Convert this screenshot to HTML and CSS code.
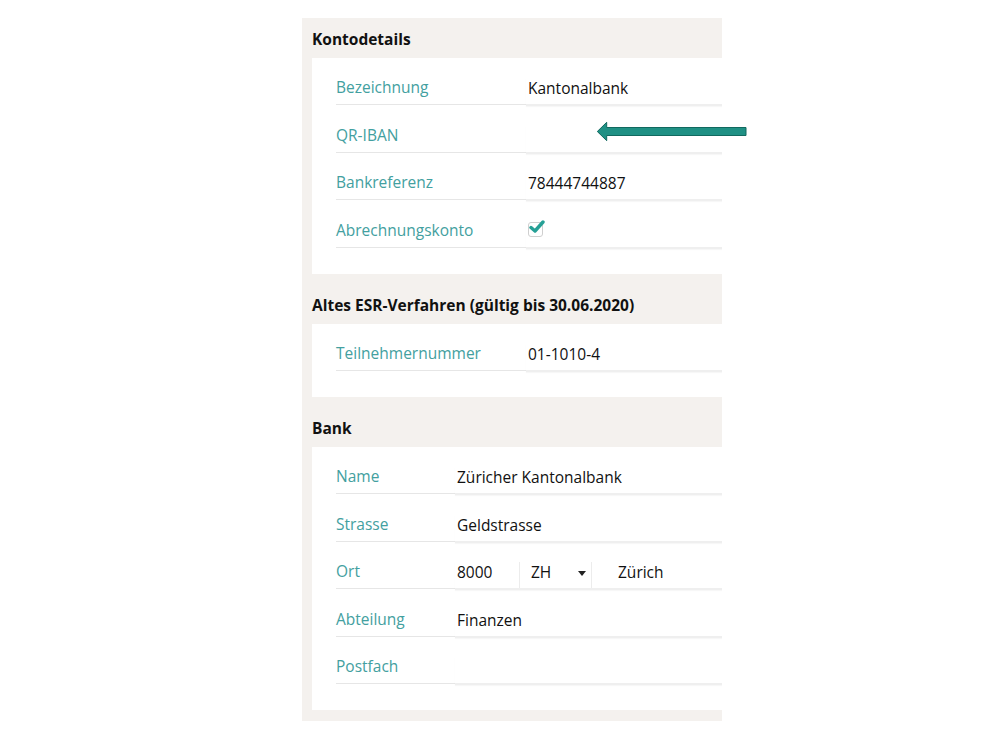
FILE: index.html
```html
<!DOCTYPE html>
<html lang="de">
<head>
<meta charset="utf-8">
<title>Kontodetails</title>
<link rel="stylesheet" href="styles.css">
</head>
<body>
<div class="panel">
  <div class="section-title">Kontodetails</div>
  <div class="card">
    <div class="row"><div class="label wide">Bezeichnung</div><div class="value">Kantonalbank</div></div>
    <div class="row"><div class="label wide">QR-IBAN</div><div class="value"></div></div>
    <div class="row"><div class="label wide">Bankreferenz</div><div class="value">78444744887</div></div>
    <div class="row"><div class="label wide">Abrechnungskonto</div><div class="value"><span class="checkbox"><svg class="check" viewBox="0 0 16 14" width="16" height="14"><path d="M2 7.5 L6 11 L14 2" fill="none" stroke="#26a096" stroke-width="3.4" stroke-linecap="round" stroke-linejoin="round"/></svg></span></div></div>
  </div>
  <div class="section-title">Altes ESR-Verfahren (gültig bis 30.06.2020)</div>
  <div class="card">
    <div class="row"><div class="label wide">Teilnehmernummer</div><div class="value">01-1010-4</div></div>
  </div>
  <div class="section-title">Bank</div>
  <div class="card">
    <div class="row"><div class="label narrow">Name</div><div class="value">Züricher Kantonalbank</div></div>
    <div class="row"><div class="label narrow">Strasse</div><div class="value">Geldstrasse</div></div>
    <div class="row"><div class="label narrow">Ort</div>
      <div class="value split">
        <div class="part plz">8000</div>
        <div class="part canton">ZH<span class="caret"></span></div>
        <div class="part city">Zürich</div>
      </div>
    </div>
    <div class="row"><div class="label narrow">Abteilung</div><div class="value">Finanzen</div></div>
    <div class="row"><div class="label narrow">Postfach</div><div class="value"></div></div>
  </div>
</div>
<svg class="arrow" width="152" height="21" viewBox="0 0 152 21">
  <polygon points="1.3,10.5 10.7,1.3 10.7,6.5 150,6.5 150,14.5 10.7,14.5 10.7,19.7" fill="#1f9084" stroke="#11695f" stroke-width="1"/>
</svg>
</body>
</html>
```
FILE: styles.css
```css
html, body {
  margin: 0;
  padding: 0;
  background: #ffffff;
}
body {
  font-family: "Open Sans", "Noto Sans", sans-serif;
  font-size: 15.5px;
  color: #111;
  position: relative;
  min-height: 745px;
}
.panel {
  margin-left: 302px;
  margin-top: 18px;
  width: 420px;
  background: #f4f1ee;
  padding: 0 0 10.5px 10px;
  box-sizing: border-box;
  overflow: hidden;
}
.section-title {
  height: 40px;
  line-height: 20px;
  padding-top: 11px;
  box-sizing: border-box;
  font-weight: 700;
  font-size: 15.5px;
  color: #111;
}
.card {
  background: #ffffff;
  padding: 0 0 26.5px 24px;
  margin-bottom: 9.5px;
}
.card:last-child { margin-bottom: 0; }
.row {
  display: flex;
  height: 47.4px;
  box-sizing: border-box;
  align-items: flex-end;
}
.label {
  flex: none;
  color: #43a0a0;
  height: 28px;
  line-height: 20px;
  border-bottom: 1px solid #e6e6e6;
  box-sizing: border-box;
}
.label.wide { width: 190px; }
.label.narrow { width: 119px; }
.value {
  flex: 1;
  height: 28px;
  line-height: 20px;
  padding-left: 2px;
  border-bottom: 2px solid #efefef;
  box-shadow: 0 1px 1px rgba(0,0,0,0.03);
  box-sizing: border-box;
  margin-bottom: -1px;
  color: #111;
  white-space: nowrap;
}
.checkbox {
  display: inline-block;
  position: relative;
  width: 13px;
  height: 13px;
  border: 1px solid #cfcfcf;
  border-radius: 3px;
  margin-top: 1px;
  vertical-align: top;
}
.check {
  position: absolute;
  left: 0px;
  top: -3px;
}
.split {
  display: flex;
  padding-left: 0;
}
.part {
  height: 100%;
  position: relative;
}
.plz { width: 65px; padding-left: 2px; border-right: 1px solid #ececec; box-sizing: border-box; }
.canton { width: 72px; padding-left: 11px; border-right: 1px solid #ececec; box-sizing: border-box; }
.city { flex: 1; padding-left: 26px; }
.caret {
  position: absolute;
  left: 58px;
  top: 9px;
  width: 0;
  height: 0;
  border-left: 4px solid transparent;
  border-right: 4px solid transparent;
  border-top: 5px solid #222;
}
.arrow {
  position: absolute;
  left: 596px;
  top: 121px;
}
```
